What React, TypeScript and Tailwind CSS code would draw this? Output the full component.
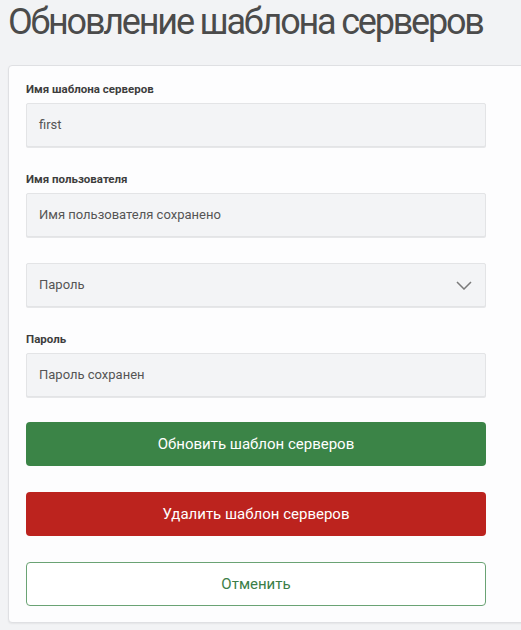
import React from "react";

const font = { fontFamily: 'Roboto, "Noto Sans", sans-serif' };

function Label({ children }: { children: React.ReactNode }) {
  return (
    <div className="mb-[6px] h-[16px] text-[11.5px] font-bold leading-[16px] text-[#3d3d3d]">
      {children}
    </div>
  );
}

function Field({ value }: { value: string }) {
  return (
    <div className="flex h-[44px] w-[460px] items-center rounded-[2px] border border-[#e3e4e6] bg-[#f3f4f6] px-[12px] text-[13px] text-[#555555] shadow-[0_1px_0_#e6e7e9]">
      {value}
    </div>
  );
}

export default function App() {
  return (
    <div className="h-[630px] w-[521px] overflow-hidden bg-[#f2f3f5]" style={font}>
      <h1 className="-mt-[1px] whitespace-nowrap pl-[8px] text-[36px] leading-[46px] font-normal tracking-[-2.2px] text-[#4b4b4b]">
        Обновление шаблона серверов
      </h1>
      <div className="ml-[8px] mt-[20px] w-[530px] rounded-[4px] border border-[#dfe0e3] bg-[#fdfdfe] px-[17px] pb-[16px] pt-[15px] shadow-[0_1px_2px_rgba(0,0,0,0.06)]">
        <Label>Имя шаблона серверов</Label>
        <Field value="first" />

        <div className="mt-[24px]">
          <Label>Имя пользователя</Label>
          <Field value="Имя пользователя сохранено" />
        </div>

        <div className="mt-[26px] flex h-[44px] w-[460px] items-center justify-between rounded-[2px] border border-[#e3e4e6] bg-[#f3f4f6] pl-[12px] pr-[13px] text-[13px] text-[#555555] shadow-[0_1px_0_#e6e7e9]">
          <span>Пароль</span>
          <svg width="16" height="9" viewBox="0 0 16 9" fill="none">
            <path d="M1 1l7 7 7-7" stroke="#7a7a7a" strokeWidth="1.5" />
          </svg>
        </div>

        <div className="mt-[24px]">
          <Label>Пароль</Label>
          <Field value="Пароль сохранен" />
        </div>

        <button className="mt-[25px] flex h-[44px] w-[460px] items-center justify-center rounded-[4px] bg-[#3b8447] text-[15px] text-white">
          Обновить шаблон серверов
        </button>
        <button className="mt-[26px] flex h-[44px] w-[460px] items-center justify-center rounded-[4px] bg-[#bc231e] text-[15px] text-white">
          Удалить шаблон серверов
        </button>
        <button className="mt-[26px] flex h-[44px] w-[460px] items-center justify-center rounded-[4px] border border-[#6aa374] bg-white text-[15px] text-[#3b7e47]">
          Отменить
        </button>
      </div>
    </div>
  );
}
